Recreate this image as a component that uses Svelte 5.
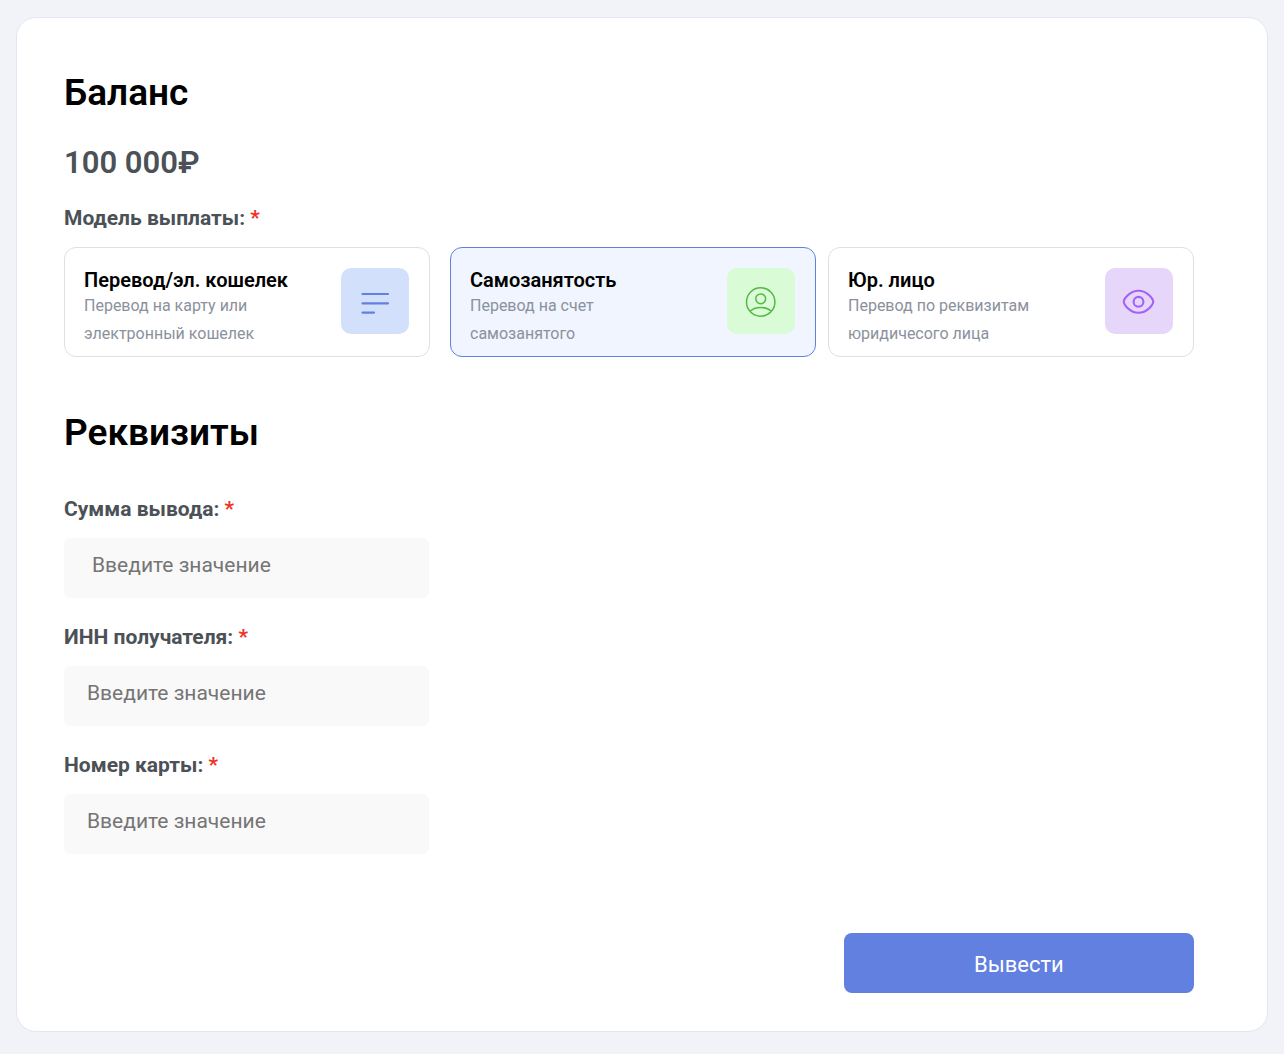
<script>
    const models = [
        { id: "wallet", title: "Перевод/эл. кошелек", desc: "Перевод на карту или электронный кошелек" },
        { id: "self", title: "Самозанятость", desc: "Перевод на счет самозанятого" },
        { id: "company", title: "Юр. лицо", desc: "Перевод по реквизитам юридичесого лица" }
    ]

    const fields = [
        { id: "amount", label: "Сумма вывода:" },
        { id: "inn", label: "ИНН получателя:" },
        { id: "card", label: "Номер карты:" }
    ]

    let selectedModel = $state("self")
    let values = $state({ amount: "", inn: "", card: "" })

    function submit(event) {
        event.preventDefault()
    }
</script>

<form class="panel" onsubmit={submit}>
    <h1>Баланс</h1>
    <p class="balance">100 000₽</p>

    <fieldset>
        <legend class="label">Модель выплаты: <span class="required">*</span></legend>
        <div class="models">
            {#each models as model}
                <label class="model {model.id}" class:selected={selectedModel === model.id}>
                    <input type="radio" name="model" value={model.id} bind:group={selectedModel} />
                    <span class="text">
                        <span class="title">{model.title}</span>
                        <span class="desc">{model.desc}</span>
                    </span>
                    <span class="icon">
                        <svg width="34" height="34" viewBox="0 0 34 34" fill="none" stroke="currentColor" stroke-linecap="round" stroke-linejoin="round" aria-hidden="true">
                            {#if model.id === "wallet"}
                                <path d="M4.5 10H30M4.5 19.3H30M4.5 28.6H16" stroke-width="2.2" />
                            {:else if model.id === "self"}
                                <circle cx="16.7" cy="18" r="14.2" stroke-width="1.5" />
                                <circle cx="16.7" cy="14.8" r="4.9" stroke-width="1.5" />
                                <path d="M6.7 26.8C11.7 22.5 21.7 22.5 26.7 26.8" stroke-width="1.5" />
                            {:else}
                                <path d="M1.8 17.8C1.8 15.3 7.5 6.8 16.5 6.8S31.2 15.3 31.2 17.8S25.5 28.8 16.5 28.8S1.8 20.3 1.8 17.8Z" stroke-width="2.1" />
                                <circle cx="16.5" cy="17.8" r="4.9" stroke-width="2.1" />
                            {/if}
                        </svg>
                    </span>
                </label>
            {/each}
        </div>
    </fieldset>

    <h2>Реквизиты</h2>

    <div class="fields">
        {#each fields as field}
            <div class="field">
                <label class="label" for={field.id}>{field.label} <span class="required">*</span></label>
                <input class={field.id} id={field.id} type="text" placeholder="Введите значение" bind:value={values[field.id]} />
            </div>
        {/each}
    </div>

    <button type="submit">Вывести</button>
</form>

<style>
    :global(body) {
        background: #f1f3f9;
        font-family: Roboto, "Noto Sans", sans-serif;
    }

    .panel {
        display: flex;
        flex-direction: column;
        margin: 17px 16px 22px;
        padding: 53px 73px 38px 47px;
        background: white;
        border: 1px solid #e1e7f2;
        border-radius: 20px;
    }

    h1, h2 {
        margin: 0;
        font-size: 37px;
        line-height: 44px;
        font-weight: 600;
        color: black;
    }

    h2 {
        margin: 54px 0 41px;
    }

    .balance {
        margin: 30px 0 24px;
        font-size: 31px;
        line-height: 36px;
        font-weight: 600;
        color: #4b5157;
    }

    fieldset {
        margin: 0;
        padding: 0;
        border: none;
        min-width: 0;
    }

    .label {
        display: block;
        padding: 0;
        margin-bottom: 16px;
        font-size: 21px;
        line-height: 26px;
        font-weight: 700;
        color: #4b5157;
    }

    .required {
        color: #ee3124;
    }

    .models {
        display: flex;
        gap: 12px;
    }

    .model {
        position: relative;
        flex: 1;
        display: flex;
        justify-content: space-between;
        align-items: flex-start;
        box-sizing: border-box;
        padding: 20px 20px 8px 19px;
        border: 1px solid #dfdfe2;
        border-radius: 12px;
        cursor: pointer;
    }

    .model:first-child {
        margin-right: 8px;
    }

    .model input {
        position: absolute;
        inset: 0;
        margin: 0;
        opacity: 0;
        cursor: pointer;
    }

    .selected {
        background: #f0f5ff;
        border-color: #6180df;
    }

    .text {
        display: flex;
        flex-direction: column;
        max-width: 200px;
    }

    .title {
        font-size: 20px;
        line-height: 24px;
        font-weight: 600;
        color: black;
        white-space: nowrap;
    }

    .desc {
        font-size: 16px;
        line-height: 28px;
        color: #8b919c;
    }

    .icon {
        display: flex;
        align-items: center;
        justify-content: center;
        width: 68px;
        height: 66px;
        border-radius: 10px;
    }

    .wallet .icon {
        background: #d2e0fc;
        color: #6180df;
    }

    .self .icon {
        background: #d9fbd6;
        color: #56b646;
    }

    .company .icon {
        background: #e6d6fa;
        color: #a461f7;
    }

    .fields {
        display: flex;
        flex-direction: column;
        gap: 26px;
        width: 32.3%;
    }

    .field input {
        display: block;
        box-sizing: border-box;
        width: 100%;
        height: 60px;
        padding: 0 23px 6px;
        border: none;
        border-radius: 6px;
        background: #f9f9f9;
        font-family: inherit;
        font-size: 21px;
    }

    .field .amount {
        padding-left: 28px;
    }

    .field input::placeholder {
        color: #757575;
    }

    button {
        align-self: flex-end;
        width: 31%;
        height: 60px;
        margin-top: 79px;
        padding: 2px 0 0;
        border: none;
        border-radius: 8px;
        background: #6180df;
        color: white;
        font-family: inherit;
        font-size: 22px;
        cursor: pointer;
    }
</style>
